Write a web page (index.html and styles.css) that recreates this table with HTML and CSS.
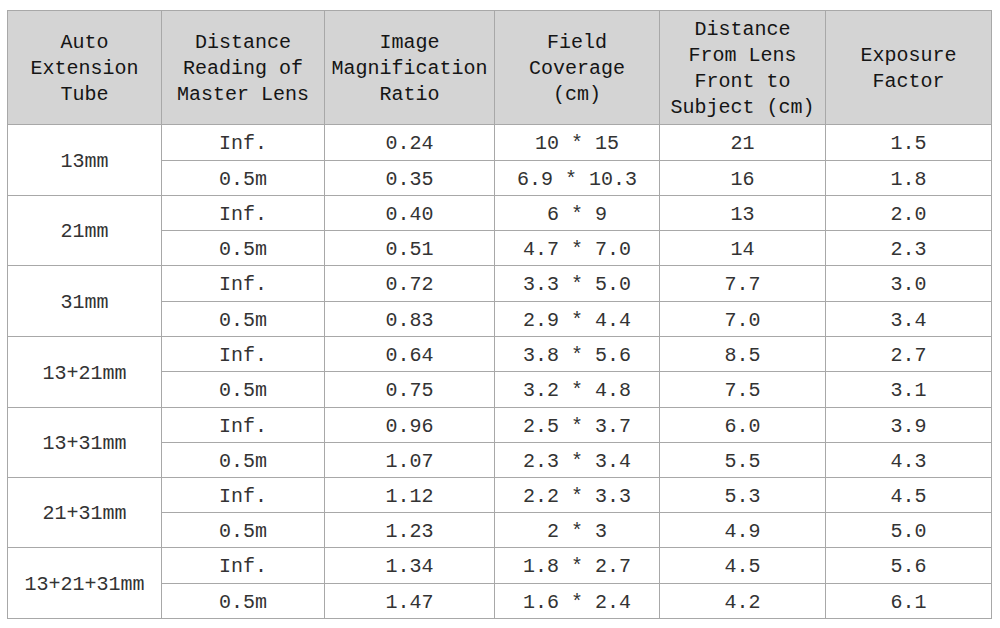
FILE: index.html
```html
<!DOCTYPE html>
<html>
<head>
<meta charset="utf-8">
<link rel="stylesheet" href="styles.css">
</head>
<body>
<table class="lens">
  <colgroup>
    <col class="c1"><col class="c2"><col class="c3"><col class="c4"><col class="c5"><col class="c6">
  </colgroup>
  <thead>
    <tr class="head">
      <th>Auto<br>Extension<br>Tube</th>
      <th>Distance<br>Reading of<br>Master Lens</th>
      <th>Image<br>Magnification<br>Ratio</th>
      <th>Field<br>Coverage<br>(cm)</th>
      <th>Distance<br>From Lens<br>Front to<br>Subject (cm)</th>
      <th>Exposure<br>Factor</th>
    </tr>
  </thead>
  <tbody>
    <tr class="r36"><td rowspan="2">13mm</td><td>Inf.</td><td>0.24</td><td>10 * 15</td><td>21</td><td>1.5</td></tr>
    <tr class="r35"><td>0.5m</td><td>0.35</td><td>6.9 * 10.3</td><td>16</td><td>1.8</td></tr>
    <tr class="r35"><td rowspan="2">21mm</td><td>Inf.</td><td>0.40</td><td>6 * 9</td><td>13</td><td>2.0</td></tr>
    <tr class="r35"><td>0.5m</td><td>0.51</td><td>4.7 * 7.0</td><td>14</td><td>2.3</td></tr>
    <tr class="r36"><td rowspan="2">31mm</td><td>Inf.</td><td>0.72</td><td>3.3 * 5.0</td><td>7.7</td><td>3.0</td></tr>
    <tr class="r35"><td>0.5m</td><td>0.83</td><td>2.9 * 4.4</td><td>7.0</td><td>3.4</td></tr>
    <tr class="r35"><td rowspan="2">13+21mm</td><td>Inf.</td><td>0.64</td><td>3.8 * 5.6</td><td>8.5</td><td>2.7</td></tr>
    <tr class="r36"><td>0.5m</td><td>0.75</td><td>3.2 * 4.8</td><td>7.5</td><td>3.1</td></tr>
    <tr class="r35"><td rowspan="2">13+31mm</td><td>Inf.</td><td>0.96</td><td>2.5 * 3.7</td><td>6.0</td><td>3.9</td></tr>
    <tr class="r35"><td>0.5m</td><td>1.07</td><td>2.3 * 3.4</td><td>5.5</td><td>4.3</td></tr>
    <tr class="r35"><td rowspan="2">21+31mm</td><td>Inf.</td><td>1.12</td><td>2.2 * 3.3</td><td>5.3</td><td>4.5</td></tr>
    <tr class="r35"><td>0.5m</td><td>1.23</td><td>2 * 3</td><td>4.9</td><td>5.0</td></tr>
    <tr class="r36"><td rowspan="2">13+21+31mm</td><td>Inf.</td><td>1.34</td><td>1.8 * 2.7</td><td>4.5</td><td>5.6</td></tr>
    <tr class="r35"><td>0.5m</td><td>1.47</td><td>1.6 * 2.4</td><td>4.2</td><td>6.1</td></tr>
  </tbody>
</table>
</body>
</html>
```
FILE: styles.css
```css
html, body {
  margin: 0;
  padding: 0;
  background: #ffffff;
}
body {
  padding: 10px 0 0 7px;
}
.lens {
  border-collapse: collapse;
  table-layout: fixed;
  width: 984px;
  font-family: "Liberation Mono", "DejaVu Sans Mono", monospace;
  font-size: 20px;
  color: #333333;
}
.c1 { width: 154px; }
.c2 { width: 163px; }
.c3 { width: 170px; }
.c4 { width: 165px; }
.c5 { width: 166px; }
.c6 { width: 166px; }
.lens th, .lens td {
  border: 1px solid #a8a8a8;
  padding: 3px 0 0;
  text-align: center;
  vertical-align: middle;
}
.lens th {
  background: #d4d4d4;
  color: #151515;
  font-weight: normal;
  line-height: 26px;
}
.head { height: 114px; }
.r35 { height: 35px; }
.r36 { height: 36px; }
.lens td { line-height: 22px; }
```
